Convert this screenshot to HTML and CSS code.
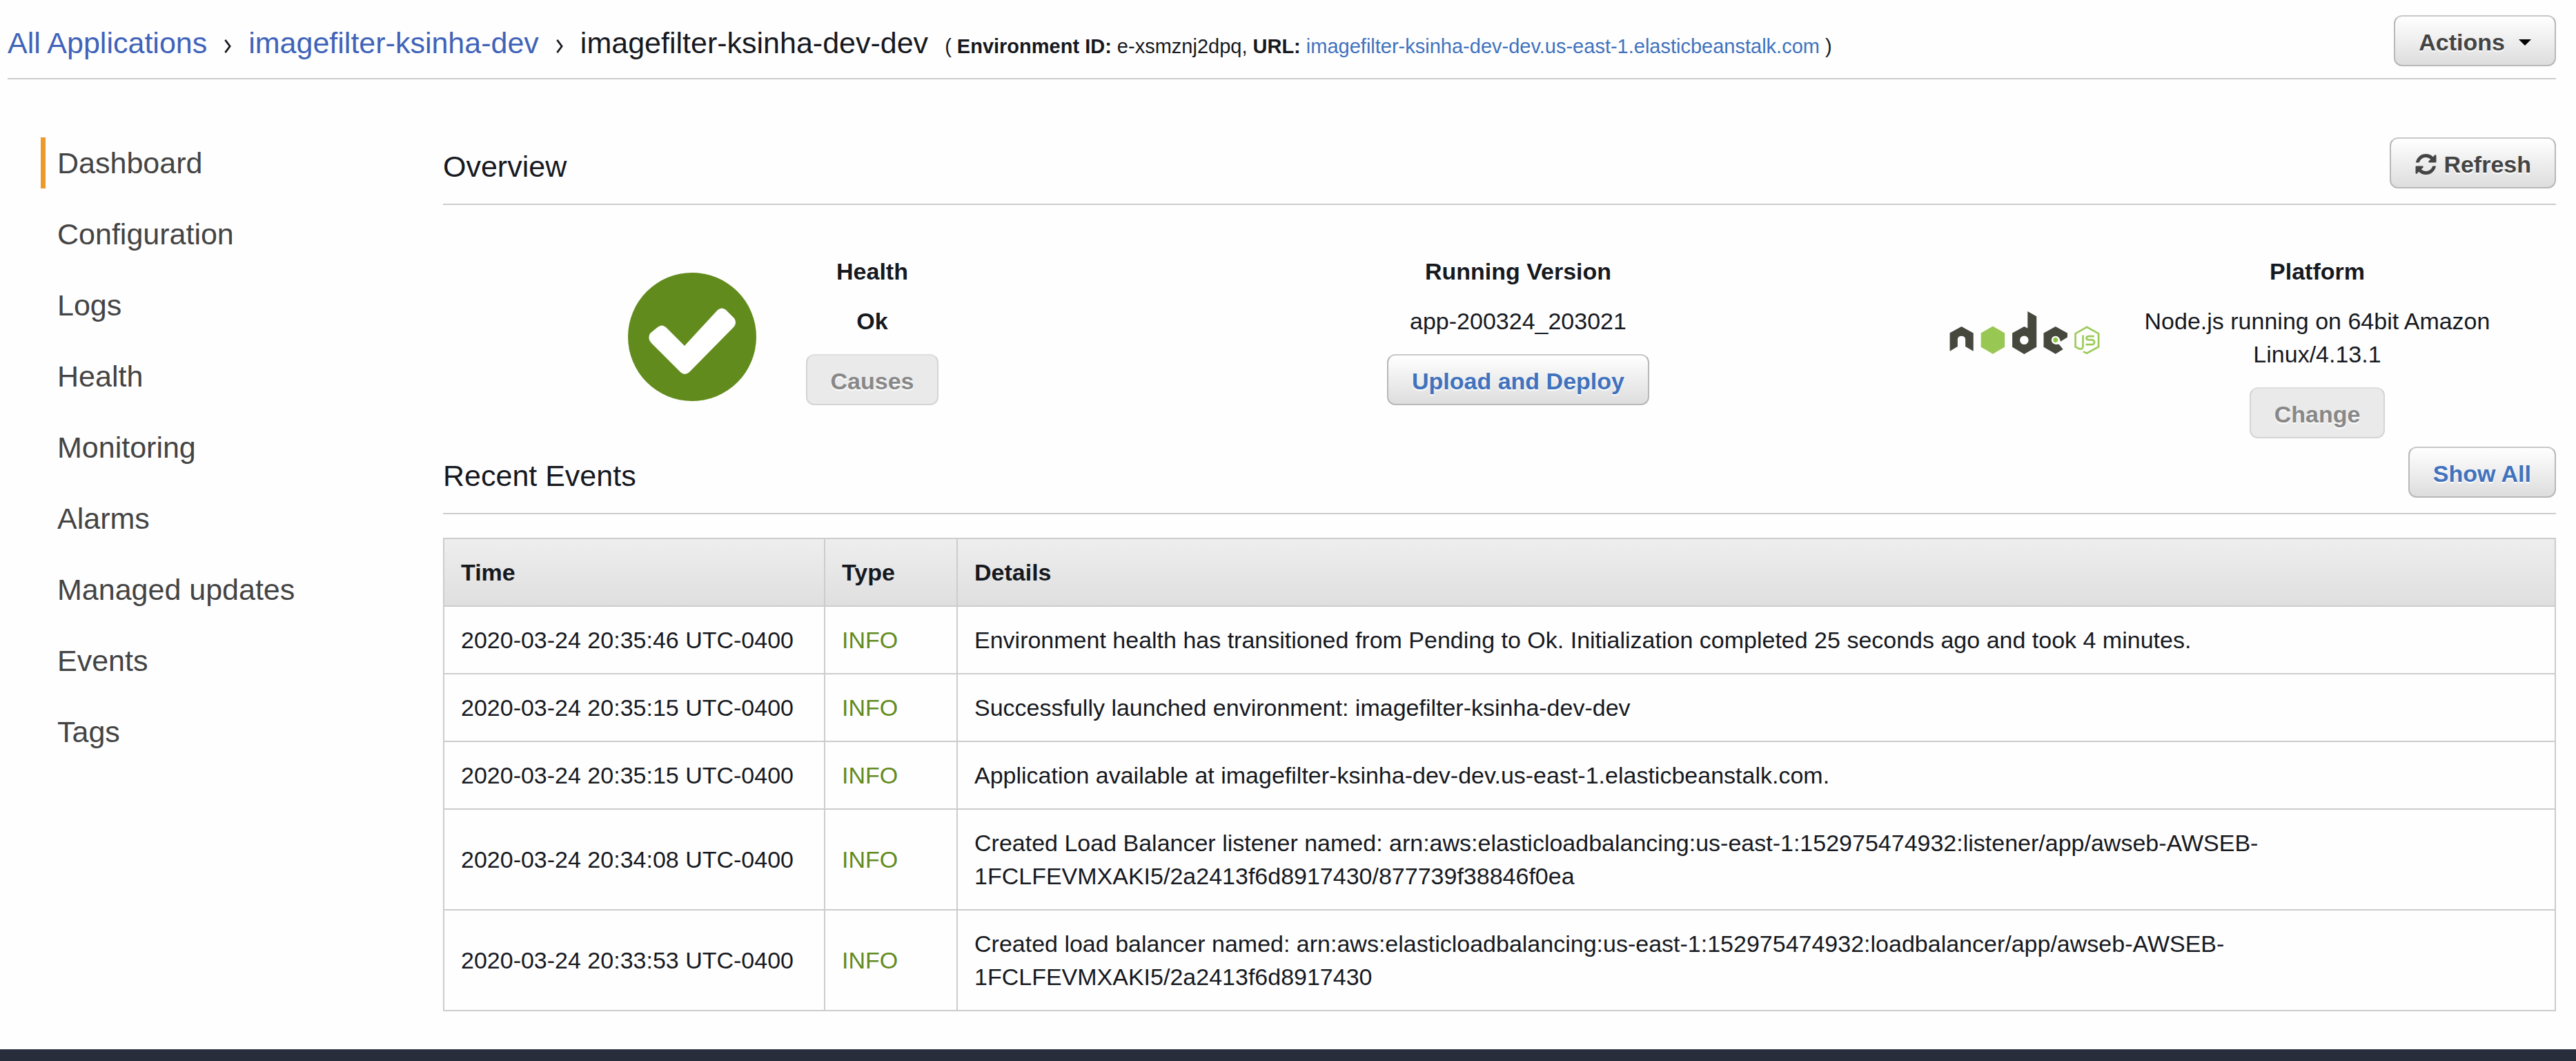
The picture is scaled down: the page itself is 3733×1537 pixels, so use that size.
FILE: index.html
```html
<!DOCTYPE html>
<html lang="en">
<head>
<meta charset="utf-8">
<meta name="viewport" content="width=device-width, initial-scale=1">
<title>imagefilter-ksinha-dev-dev - Dashboard</title>
<link rel="stylesheet" href="styles.css">
</head>
<body>
<header class="topbar">
  <nav class="breadcrumb" aria-label="Breadcrumb">
    <a href="#">All Applications</a>
    <svg class="chevron" viewBox="0 0 12 22" aria-hidden="true"><path d="M2 1 9.500 11 2 21"/></svg>
    <a href="#">imagefilter-ksinha-dev</a>
    <svg class="chevron" viewBox="0 0 12 22" aria-hidden="true"><path d="M2 1 9.500 11 2 21"/></svg>
    <span>imagefilter-ksinha-dev-dev</span>
    <span class="env">( <b>Environment ID:</b> e-xsmznj2dpq, <b>URL:</b> <a href="#">imagefilter-ksinha-dev-dev.us-east-1.elasticbeanstalk.com</a> )</span>
  </nav>
  <button type="button" class="btn btn-menu">Actions<span class="caret"></span></button>
</header>

<div class="layout">
  <nav class="sidebar" aria-label="Environment">
    <a class="current" href="#">Dashboard</a>
    <a href="#">Configuration</a>
    <a href="#">Logs</a>
    <a href="#">Health</a>
    <a href="#">Monitoring</a>
    <a href="#">Alarms</a>
    <a href="#">Managed updates</a>
    <a href="#">Events</a>
    <a href="#">Tags</a>
  </nav>

  <main class="content">
    <section>
      <div class="section-head">
        <h2>Overview</h2>
        <button type="button" class="btn btn-refresh">
          <svg class="refresh-icon" viewBox="0 0 1536 1536" aria-hidden="true"><path d="M1511 928q0 5-1 7-64 268-268 434.500T764 1536q-146 0-282.500-55T238 1324l-129 129q-19 19-45 19t-45-19-19-45V960q0-26 19-45t45-19h448q26 0 45 19t19 45-19 45l-137 137q71 66 161 102t187 36q134 0 250-65t186-179q11-17 53-117 8-23 30-23h192q13 0 22.500 9.500t9.500 22.500zm25-800v448q0 26-19 45t-45 19h-448q-26 0-45-19t-19-45 19-45l138-138Q969 256 768 256q-134 0-250 65T332 500q-11 17-53 117-8 23-30 23H50q-13 0-22.500-9.500T18 608v-7q65-268 270-434.500T768 0q146 0 284 55.500T1297 212l130-129q19-19 45-19t45 19 19 45z"/></svg>
          Refresh
        </button>
      </div>
      <div class="overview">
        <div class="panel">
          <svg class="status-icon" viewBox="0 0 186 186" role="img" aria-label="Ok">
            <circle cx="93" cy="93" r="93" fill="#628b1d"/>
            <path d="M32 88q-4 8 2 14l42 42q6 6 13 0l65-66q4-6 0-12l-12-12q-6-5-12 0L82 106 55 79q-6-5-12 0z" fill="#fff"/>
          </svg>
          <div class="panel-text panel-narrow">
            <h3>Health</h3>
            <p><b>Ok</b></p>
            <button type="button" class="btn" disabled>Causes</button>
          </div>
        </div>
        <div class="panel">
          <div class="panel-text">
            <h3>Running Version</h3>
            <p>app-200324_203021</p>
            <button type="button" class="btn btn-link">Upload and Deploy</button>
          </div>
        </div>
        <div class="panel panel-platform">
          <svg class="node-logo" viewBox="72 62 654 187" role="img" aria-label="Node.js">
            <g fill="#46483e">
              <path d="M72 156 123 128 175 157V236L140 216V184q-2-14-17-14t-17 14V216L72 236z"/>
              <path fill-rule="evenodd" d="M345 157 397 128 412 136V62L451 84V218L397 249 345 218zM378 188a19 19 0 1 0 38 0a19 19 0 1 0-38 0z"/>
              <path d="M482 157 534 128 586 157V175L556 194 553 184Q546 170 534 170 517 172 516 188 517 202 534 207L549 206 567 228 534 248 482 218z"/>
            </g>
            <path d="M260 127 312 157V218L260 248 208 218V157z" fill="#99c754"/>
            <path d="M534 175 544 181V193L534 199 524 193V181z" fill="#8cc83e"/>
            <g fill="none" stroke="#9acb58" stroke-width="8">
              <path d="M655 238 671 245 722 217V159L671 131 621 159V217L634 224Q654 232 654 212V166"/>
              <path d="M703 171H682Q669 171 669 179T682 187H693Q704 188 704 197T693 207H666"/>
            </g>
          </svg>
          <div class="panel-text panel-wide">
            <h3>Platform</h3>
            <p>Node.js running on 64bit Amazon Linux/4.13.1</p>
            <button type="button" class="btn" disabled>Change</button>
          </div>
        </div>
      </div>
    </section>

    <section>
      <div class="section-head">
        <h2>Recent Events</h2>
        <button type="button" class="btn btn-link">Show All</button>
      </div>
      <table class="events">
        <colgroup><col class="col-time"><col class="col-type"><col></colgroup>
        <thead>
          <tr><th scope="col">Time</th><th scope="col">Type</th><th scope="col">Details</th></tr>
        </thead>
        <tbody>
          <tr><td>2020-03-24 20:35:46 UTC-0400</td><td class="info">INFO</td><td>Environment health has transitioned from Pending to Ok. Initialization completed 25 seconds ago and took 4 minutes.</td></tr>
          <tr><td>2020-03-24 20:35:15 UTC-0400</td><td class="info">INFO</td><td>Successfully launched environment: imagefilter-ksinha-dev-dev</td></tr>
          <tr><td>2020-03-24 20:35:15 UTC-0400</td><td class="info">INFO</td><td>Application available at imagefilter-ksinha-dev-dev.us-east-1.elasticbeanstalk.com.</td></tr>
          <tr><td>2020-03-24 20:34:08 UTC-0400</td><td class="info">INFO</td><td>Created Load Balancer listener named: arn:aws:elasticloadbalancing:us-east-1:152975474932:listener/app/awseb-AWSEB-<wbr>1FCLFEVMXAKI5/2a2413f6d8917430/877739f38846f0ea</td></tr>
          <tr><td>2020-03-24 20:33:53 UTC-0400</td><td class="info">INFO</td><td>Created load balancer named: arn:aws:elasticloadbalancing:us-east-1:152975474932:loadbalancer/app/awseb-AWSEB-<wbr>1FCLFEVMXAKI5/2a2413f6d8917430</td></tr>
        </tbody>
      </table>
    </section>
  </main>
</div>

<footer class="footer"></footer>
</body>
</html>
```
FILE: styles.css
```css
* {
  box-sizing: border-box;
}

body {
  display: flex;
  flex-direction: column;
  min-height: 100vh;
  margin: 0;
  background: #fefefe;
  color: #16191f;
  font-family: "Liberation Sans", Arial, sans-serif;
  font-size: 34px;
  line-height: 48px;
}

a {
  color: #4072bd;
  text-decoration: none;
}

h2,
h3,
p {
  margin: 0;
}

/* Buttons */
.btn {
  display: inline-flex;
  align-items: center;
  padding: 13px 34px 9px;
  border: 2px solid #b8b8b8;
  border-top-color: #c8c8c8;
  border-radius: 12px;
  background: linear-gradient(#fff, #ddd);
  color: #444;
  font: bold 34px/48px "Liberation Sans", Arial, sans-serif;
  text-shadow: 0 2px 2px #fff;
}

.btn:disabled {
  border-color: #d4d4d4;
  border-top-color: #dedede;
  background: #eaeaea;
  color: #888;
}

.btn-link {
  color: #4072bd;
}

.btn-menu {
  gap: 20px;
}

.btn-refresh {
  gap: 9px;
}

.caret {
  border: 9px solid transparent;
  border-top-color: #000;
  border-bottom: 0;
}

.refresh-icon {
  width: 33px;
  height: 30px;
  fill: #444;
}

/* Header */
.topbar {
  display: flex;
  align-items: center;
  justify-content: space-between;
  margin: 0 29px 0 11px;
  padding: 22px 0 17px;
  border-bottom: 2px solid #ccc;
}

.breadcrumb {
  display: flex;
  align-items: baseline;
  gap: 24px;
  padding-top: 10px;
  font-size: 43px;
}

.breadcrumb > a {
  color: #3f63b9;
}

.chevron {
  width: 12px;
  height: 20px;
  margin-bottom: 4px;
  fill: none;
  stroke: #16191f;
  stroke-width: 3;
}

.env {
  font-size: 29px;
}

/* Page columns */
.layout {
  display: flex;
  padding: 84px 29px 55px 59px;
}

.sidebar {
  display: flex;
  flex: 0 0 583px;
  flex-direction: column;
  gap: 29px;
  font-size: 43px;
}

.sidebar a {
  padding: 13px 0 13px 17px;
  border-left: 7px solid transparent;
  color: #444;
}

.sidebar .current {
  border-color: #ec9a2c;
}

.content {
  flex: 1;
  min-width: 0;
}

.section-head {
  display: flex;
  align-items: center;
  justify-content: space-between;
  padding-bottom: 22px;
  border-bottom: 2px solid #ccc;
}

.section-head h2 {
  padding-top: 10px;
  font-size: 43px;
  font-weight: normal;
}

/* Overview */
.overview {
  display: grid;
  grid-template-columns: 998fr 1120fr 944fr;
  padding: 72px 0 12px;
}

.panel {
  display: flex;
  align-items: flex-start;
  justify-content: center;
  gap: 60px;
}

.panel-platform {
  padding-right: 26px;
}

.panel-text {
  display: flex;
  flex-direction: column;
  align-items: center;
  gap: 24px;
  text-align: center;
}

.panel-text h3 {
  font-size: 34px;
}

.panel-narrow {
  width: 216px;
}

.panel-wide {
  width: 510px;
}

.status-icon {
  width: 186px;
  height: 186px;
  margin-top: 26px;
}

.node-logo {
  width: 218px;
  height: 62px;
  margin-top: 82px;
}

/* Events table */
.events {
  width: 100%;
  margin-top: 34px;
  border-collapse: collapse;
  table-layout: fixed;
}

.col-time {
  width: 552px;
}

.col-type {
  width: 192px;
}

.events th,
.events td {
  padding: 24px;
  border: 2px solid #ccc;
  text-align: left;
  vertical-align: middle;
}

.events thead tr {
  background: linear-gradient(#eee, #dfdfdf);
}

.events .info {
  color: #628b1d;
}

.footer {
  flex: 1 0 16px;
  background: #272d3a;
}
```
